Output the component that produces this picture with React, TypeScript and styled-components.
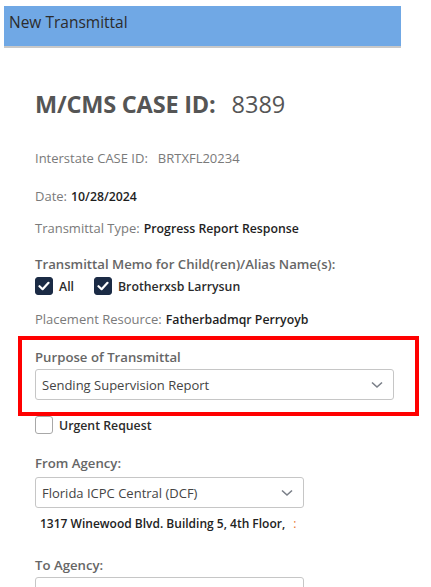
import React from 'react'
import styled, { createGlobalStyle } from 'styled-components'

const GlobalStyle = createGlobalStyle`
  html, body {
    margin: 0;
    padding: 0;
    background: #fff;
  }
  body {
    font-family: 'Open Sans', 'Noto Sans', sans-serif;
    color: #333;
  }
`

const Page = styled.div`
  width: 431px;
  height: 587px;
  overflow: hidden;
  padding: 6px 0 0 4px;
  box-sizing: border-box;
`

const Header = styled.div`
  width: 392px;
  height: 34px;
  background: #70a8e5;
  border-bottom: 2px solid #c8c8c8;
  padding: 6px 0 0 5px;
  line-height: 21px;
  font-size: 15.5px;
  color: #2c2c2c;
`

const Content = styled.div`
  padding-left: 31px;
  display: flex;
  flex-direction: column;
`

const CaseTitle = styled.div`
  margin-top: 42px;
  height: 28px;
  display: flex;
  align-items: center;
  gap: 16px;
  color: #555;
  font-size: 23.5px;
`

const CaseLabel = styled.span`
  font-weight: 700;
  letter-spacing: -0.2px;
`

const Line = styled.div<{ $mt: number }>`
  margin-top: ${(p) => p.$mt}px;
  height: 18px;
  line-height: 18px;
  font-size: 13px;
  color: #7a7a7a;
  white-space: nowrap;
`

const Value = styled.span`
  color: #1e1e1e;
  font-size: 12.3px;
  font-weight: 600;
  margin-left: 4px;
`

const PlainValue = styled.span`
  margin-left: 10px;
`

const Label = styled.div<{ $mt: number }>`
  margin-top: ${(p) => p.$mt}px;
  height: 20px;
  line-height: 20px;
  font-size: 13.2px;
  font-weight: 600;
  color: #666;
  white-space: nowrap;
`

const CheckRow = styled.div<{ $mt: number }>`
  margin-top: ${(p) => p.$mt}px;
  display: flex;
  align-items: center;
  gap: 20px;
`

const CheckItem = styled.label`
  display: flex;
  align-items: center;
  gap: 6px;
  font-size: 12.3px;
  font-weight: 600;
  color: #2b2b2b;
`

const Box = styled.span<{ $checked?: boolean }>`
  width: 18px;
  height: 18px;
  box-sizing: border-box;
  border-radius: 3px;
  display: flex;
  align-items: center;
  justify-content: center;
  background: ${(p) => (p.$checked ? '#1b2b45' : '#fff')};
  border: 1px solid ${(p) => (p.$checked ? '#1b2b45' : '#a8a8a8')};
`

const Highlight = styled.div`
  margin: 8px 0 0 -17px;
  width: 401px;
  height: 80px;
  box-sizing: border-box;
  border: 4px solid #f00;
  padding: 7px 0 0 13px;
`

const Select = styled.div<{ $w: number; $mt: number }>`
  margin-top: ${(p) => p.$mt}px;
  width: ${(p) => p.$w}px;
  height: 31px;
  box-sizing: border-box;
  border: 1px solid #c6c6c6;
  border-radius: 3px;
  display: flex;
  align-items: center;
  justify-content: space-between;
  padding: 0 10px 0 6px;
  font-size: 13px;
  color: #444;
  background: #fff;
`

const Address = styled.div`
  margin-top: 7px;
  padding-left: 5px;
  height: 18px;
  line-height: 18px;
  font-size: 12px;
  font-weight: 600;
  color: #222;
  white-space: nowrap;
`

const Trail = styled.span`
  color: #e8742e;
  margin-left: 8px;
  font-weight: 400;
`

const Chevron = () => (
  <svg width="12" height="8" viewBox="0 0 12 8">
    <path d="M1 1.5 L6 6 L11 1.5" fill="none" stroke="#7a7f88" strokeWidth="1.6" />
  </svg>
)

const Check = () => (
  <svg width="12" height="10" viewBox="0 0 12 10">
    <path d="M1.5 5.2 L4.6 8.2 L10.5 1.8" fill="none" stroke="#fff" strokeWidth="2.2" strokeLinecap="round" strokeLinejoin="round" />
  </svg>
)

export default function App() {
  return (
    <>
      <GlobalStyle />
      <Page>
        <Header>New Transmittal</Header>
        <Content>
          <CaseTitle>
            <CaseLabel>M/CMS CASE ID:</CaseLabel>
            <span>8389</span>
          </CaseTitle>
          <Line $mt={31}>
            Interstate CASE ID:<PlainValue>BRTXFL20234</PlainValue>
          </Line>
          <Line $mt={20}>
            Date:<Value>10/28/2024</Value>
          </Line>
          <Line $mt={14}>
            Transmittal Type:<Value>Progress Report Response</Value>
          </Line>
          <Label $mt={17}>Transmittal Memo for Child(ren)/Alias Name(s):</Label>
          <CheckRow $mt={3}>
            <CheckItem>
              <Box $checked>
                <Check />
              </Box>
              All
            </CheckItem>
            <CheckItem>
              <Box $checked>
                <Check />
              </Box>
              Brotherxsb Larrysun
            </CheckItem>
          </CheckRow>
          <Line $mt={15}>
            Placement Resource:<Value>Fatherbadmqr Perryoyb</Value>
          </Line>
          <Highlight>
            <Label $mt={0}>Purpose of Transmittal</Label>
            <Select $w={359} $mt={2}>
              Sending Supervision Report
              <Chevron />
            </Select>
          </Highlight>
          <CheckRow $mt={0}>
            <CheckItem>
              <Box />
              Urgent Request
            </CheckItem>
          </CheckRow>
          <Label $mt={19}>From Agency:</Label>
          <Select $w={269} $mt={4}>
            Florida ICPC Central (DCF)
            <Chevron />
          </Select>
          <Address>
            1317 Winewood Blvd. Building 5, 4th Floor,<Trail>:</Trail>
          </Address>
          <Label $mt={22}>To Agency:</Label>
          <Select $w={269} $mt={2} />
        </Content>
      </Page>
    </>
  )
}
